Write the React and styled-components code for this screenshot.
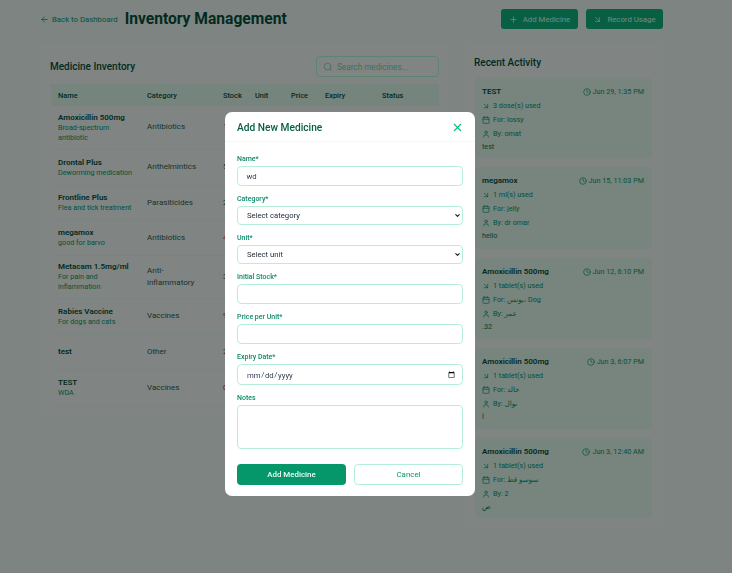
import React from "react";
import styled, { createGlobalStyle } from "styled-components";
import { ArrowLeft, ArrowDownRight, Calendar, ChevronDown, Clock, Plus, Search, User, X } from "lucide-react";

const medicines = [
  { name: "Amoxicillin 500mg", desc: "Broad-spectrum antibiotic", category: "Antibiotics", stock: "120", h: 43 },
  { name: "Drontal Plus", desc: "Deworming medication", category: "Anthelmintics", stock: "50", h: 36 },
  { name: "Frontline Plus", desc: "Flea and tick treatment", category: "Parasiticides", stock: "25", h: 35 },
  { name: "megamox", desc: "good for barvo", category: "Antibiotics", stock: "4", low: true, h: 35 },
  { name: "Metacam 1.5mg/ml", desc: "For pain and inflammation", category: "Anti-inflammatory", stock: "30", h: 43 },
  { name: "Rabies Vaccine", desc: "For dogs and cats", category: "Vaccines", stock: "95", h: 36 },
  { name: "test", desc: "", category: "Other", stock: "20", h: 35 },
  { name: "TEST", desc: "WDA", category: "Vaccines", stock: "0", low: true, h: 37 },
];

const activity = [
  { name: "TEST", time: "Jun 29, 1:35 PM", used: "3 dose(s) used", pet: "lossy", by: "omat", note: "test", h: 80 },
  { name: "megamox", time: "Jun 15, 11:03 PM", used: "1 ml(s) used", pet: "jelly", by: "dr omar", note: "hello", h: 82 },
  { name: "Amoxicillin 500mg", time: "Jun 12, 6:10 PM", used: "1 tablet(s) used", pet: "يونس، Dog", by: "عمر", note: ".32", h: 81 },
  { name: "Amoxicillin 500mg", time: "Jun 3, 6:07 PM", used: "1 tablet(s) used", pet: "خالد", by: "نوال", note: "ا", h: 81 },
  { name: "Amoxicillin 500mg", time: "Jun 3, 12:40 AM", used: "1 tablet(s) used", pet: "سوسو قط", by: "2", note: "ص", h: 80 },
];

const GlobalStyle = createGlobalStyle`
  html, body {
    margin: 0;
    height: 573px;
    overflow: hidden;
    background: #e3f1ec;
    font-family: Roboto, "DejaVu Sans", sans-serif;
  }
  * { box-sizing: border-box; }
`;

const App = () => (
  <>
    <GlobalStyle />
    <Page>
      <Header>
        <HeaderLeft>
          <BackLink>
            <ArrowLeft size={9} strokeWidth={2} />
            Back to Dashboard
          </BackLink>
          <Title>Inventory Management</Title>
        </HeaderLeft>
        <HeaderActions>
          <ActionButton>
            <Plus size={9} />
            Add Medicine
          </ActionButton>
          <ActionButton>
            <ArrowDownRight size={9} />
            Record Usage
          </ActionButton>
        </HeaderActions>
      </Header>

      <Columns>
        <InventoryPanel>
          <PanelTop>
            <PanelTitle>Medicine Inventory</PanelTitle>
            <SearchBox>
              <Search size={10} />
              <span>Search medicines...</span>
            </SearchBox>
          </PanelTop>
          <Table>
            <thead>
              <tr>
                <Th $w={89}>Name</Th>
                <Th $w={76}>Category</Th>
                <Th $w={32}>Stock</Th>
                <Th $w={36}>Unit</Th>
                <Th $w={34}>Price</Th>
                <Th $w={57}>Expiry</Th>
                <Th $w={64}>Status</Th>
              </tr>
            </thead>
            <tbody>
              {medicines.map((m) => (
                <Row key={m.name} $h={m.h}>
                  <td>
                    <MedName>{m.name}</MedName>
                    {m.desc && <MedDesc>{m.desc}</MedDesc>}
                  </td>
                  <td>{m.category}</td>
                  <StockCell $low={m.low}>{m.stock}</StockCell>
                  <td colSpan={4} />
                </Row>
              ))}
            </tbody>
          </Table>
        </InventoryPanel>

        <ActivityPanel>
          <ActivityTitle>Recent Activity</ActivityTitle>
          <CardList>
            {activity.map((a) => (
              <Card key={a.time} $h={a.h}>
                <CardTop>
                  <MedName>{a.name}</MedName>
                  <CardTime>
                    <Clock size={8} />
                    {a.time}
                  </CardTime>
                </CardTop>
                <CardLine>
                  <ArrowDownRight size={8} />
                  {a.used}
                </CardLine>
                <CardLine>
                  <Calendar size={8} />
                  For: {a.pet}
                </CardLine>
                <CardLine>
                  <User size={8} />
                  By: {a.by}
                </CardLine>
                <CardNote>{a.note}</CardNote>
              </Card>
            ))}
          </CardList>
        </ActivityPanel>
      </Columns>
    </Page>

    <Overlay>
      <Modal>
        <ModalHeader>
          <ModalTitle>Add New Medicine</ModalTitle>
          <CloseButton>
            <X size={13} />
          </CloseButton>
        </ModalHeader>
        <Form onSubmit={(e) => e.preventDefault()}>
          <Field>
            <Label>Name*</Label>
            <TextInput defaultValue="wd" />
          </Field>
          <Field>
            <Label>Category*</Label>
            <SelectWrap>
              <Select>
                <option>Select category</option>
              </Select>
              <ChevronDown size={7} strokeWidth={3.5} />
            </SelectWrap>
          </Field>
          <Field>
            <Label>Unit*</Label>
            <SelectWrap>
              <Select>
                <option>Select unit</option>
              </Select>
              <ChevronDown size={7} strokeWidth={3.5} />
            </SelectWrap>
          </Field>
          <Field>
            <Label>Initial Stock*</Label>
            <TextInput type="number" />
          </Field>
          <Field>
            <Label>Price per Unit*</Label>
            <TextInput type="number" />
          </Field>
          <Field>
            <Label>Expiry Date*</Label>
            <TextInput type="date" $tall />
          </Field>
          <Field>
            <Label>Notes</Label>
            <NotesInput />
          </Field>
          <FormButtons>
            <SubmitButton type="submit">Add Medicine</SubmitButton>
            <CancelButton type="button">Cancel</CancelButton>
          </FormButtons>
        </Form>
      </Modal>
    </Overlay>
  </>
);

const Page = styled.div`
  width: 732px;
  height: 573px;
  padding: 9px 69px 0 40px;
  overflow: hidden;
`;

const Header = styled.header`
  height: 20px;
  display: flex;
  align-items: center;
  justify-content: space-between;
`;

const HeaderLeft = styled.div`
  display: flex;
  align-items: center;
  gap: 7px;
`;

const BackLink = styled.a`
  display: flex;
  align-items: center;
  gap: 3px;
  font-size: 7.8px;
  color: #059669;
`;

const Title = styled.h1`
  margin: 0;
  font-size: 15.6px;
  font-weight: 700;
  color: #064e3b;
`;

const HeaderActions = styled.div`
  display: flex;
  gap: 8px;
`;

const ActionButton = styled.button`
  width: 77px;
  height: 20px;
  display: flex;
  align-items: center;
  justify-content: center;
  gap: 5px;
  padding: 0;
  border: 0;
  border-radius: 3px;
  background: #0fae7c;
  color: #d1fae5;
  font: 400 7.8px Roboto, sans-serif;
`;

const Columns = styled.div`
  margin-top: 15px;
  display: flex;
  gap: 16px;
  align-items: flex-start;
`;

const InventoryPanel = styled.section`
  width: 409px;
  height: 373px;
  padding: 12px 10px 0;
  background: #e9f2ee;
  border-radius: 5px;
`;

const PanelTop = styled.div`
  height: 21px;
  margin-bottom: 7px;
  display: flex;
  align-items: center;
  justify-content: space-between;
`;

const PanelTitle = styled.h2`
  margin: 0;
  font-size: 10px;
  font-weight: 500;
  color: #064e3b;
`;

const SearchBox = styled.div`
  width: 123px;
  height: 21px;
  display: flex;
  align-items: center;
  gap: 4px;
  padding-left: 6px;
  border: 1px solid #a7f3d0;
  border-radius: 4px;
  color: #6fcfa8;
  font-size: 8.2px;
`;

const Table = styled.table`
  width: 388px;
  margin-left: 1px;
  border-collapse: collapse;
  table-layout: fixed;
  font-size: 8px;
  color: #2a5c4e;
`;

const Th = styled.th`
  width: ${(p) => p.$w}px;
  height: 22px;
  padding: 0 7px;
  text-align: left;
  font-size: 7.4px;
  font-weight: 500;
  background: #d8f0e6;
  color: #064e3b;
`;

const Row = styled.tr`
  height: ${(p) => p.$h}px;
  border-bottom: 1px solid #dcefe7;

  td {
    padding: 0 7px;
    line-height: 12px;
  }
`;

const StockCell = styled.td`
  color: ${(p) => (p.$low ? "#dc2626" : "#2a5c4e")};
`;

const MedName = styled.div`
  font-size: 8px;
  font-weight: 600;
  line-height: 11px;
  color: #064e3b;
`;

const MedDesc = styled.div`
  font-size: 7.2px;
  line-height: 10px;
  color: #059669;
`;

const ActivityPanel = styled.section`
  width: 198px;
  height: 485px;
  padding: 10px 11px 0 10px;
  background: #e9f2ee;
  border-radius: 5px;
`;

const ActivityTitle = styled.h2`
  margin: 1px 0 8px -1px;
  height: 15px;
  line-height: 15px;
  font-size: 10px;
  font-weight: 500;
  color: #064e3b;
`;

const CardList = styled.div`
  display: flex;
  flex-direction: column;
  gap: 9px;
`;

const Card = styled.article`
  height: ${(p) => p.$h}px;
  padding: 8px 8px 0 7px;
  background: #daf0e6;
  border-radius: 4px;
  font-size: 7.2px;
  color: #059669;
`;

const CardTop = styled.div`
  display: flex;
  align-items: center;
  justify-content: space-between;
`;

const CardTime = styled.div`
  display: flex;
  align-items: center;
  gap: 2px;
`;

const CardLine = styled.div`
  margin-top: 3px;
  height: 11px;
  display: flex;
  align-items: center;
  gap: 3px;
`;

const CardNote = styled.div`
  margin-top: 3px;
  color: #047857;
`;

const Overlay = styled.div`
  position: fixed;
  inset: 0;
  display: flex;
  align-items: flex-start;
  justify-content: center;
  padding-top: 112px;
  background: rgba(0, 0, 0, 0.45);
  backdrop-filter: blur(0.45px);
`;

const Modal = styled.div`
  width: 250px;
  height: 384px;
  margin-left: -32px;
  background: #fff;
  border-radius: 7px;
  filter: blur(0.2px);
`;

const ModalHeader = styled.div`
  height: 30px;
  display: flex;
  align-items: center;
  justify-content: space-between;
  padding: 1px 11px 0 12px;
  border-bottom: 1px solid #ecfdf5;
`;

const ModalTitle = styled.h3`
  margin: 0;
  font-size: 10.2px;
  font-weight: 500;
  color: #065f46;
`;

const CloseButton = styled.button`
  display: flex;
  padding: 0;
  border: 0;
  background: none;
  color: #10b981;
`;

const Form = styled.form`
  display: flex;
  flex-direction: column;
  padding: 12px 12px 0;
  gap: 8px;
`;

const Field = styled.label`
  display: flex;
  flex-direction: column;
  gap: 2px;
`;

const Label = styled.span`
  height: 10px;
  line-height: 10px;
  font-size: 7px;
  font-weight: 500;
  color: #0f8a6a;
`;

// zoomed so the calendar glyph of the date input shrinks with the control
const TextInput = styled.input`
  zoom: 0.6;
  width: 100%;
  height: ${(p) => (p.$tall ? 35 : 33.4)}px;
  padding: 0 8px 0 14px;
  border: 1.7px solid #b5efd9;
  border-radius: 7px;
  background: #fff;
  color: #374151;
  font: 12.9px Roboto, sans-serif;
  outline: none;
`;

const SelectWrap = styled.div`
  position: relative;

  svg {
    position: absolute;
    top: 6px;
    right: 2px;
    color: #111827;
    pointer-events: none;
  }
`;

const Select = styled.select`
  display: block;
  appearance: none;
  width: 100%;
  height: 19px;
  padding: 0 9px;
  border: 1px solid #b5efd9;
  border-radius: 4px;
  background: #fff;
  color: #1f2937;
  font: 7.7px Roboto, sans-serif;
  outline: none;
`;

const NotesInput = styled.textarea`
  display: block;
  width: 100%;
  height: 44px;
  padding: 4px 8px;
  border: 1px solid #b5efd9;
  border-radius: 4px;
  resize: none;
  outline: none;
`;

const FormButtons = styled.div`
  margin-top: 7px;
  display: flex;
  gap: 8px;
`;

const SubmitButton = styled.button`
  flex: 0 0 109px;
  height: 21px;
  border: 0;
  border-radius: 4px;
  background: #059669;
  color: #ecfdf5;
  font: 500 7.9px Roboto, sans-serif;
`;

const CancelButton = styled.button`
  flex: 1;
  height: 21px;
  border: 1px solid #b5efd9;
  border-radius: 4px;
  background: #fff;
  color: #059669;
  font: 400 7.9px Roboto, sans-serif;
`;

export default App;
